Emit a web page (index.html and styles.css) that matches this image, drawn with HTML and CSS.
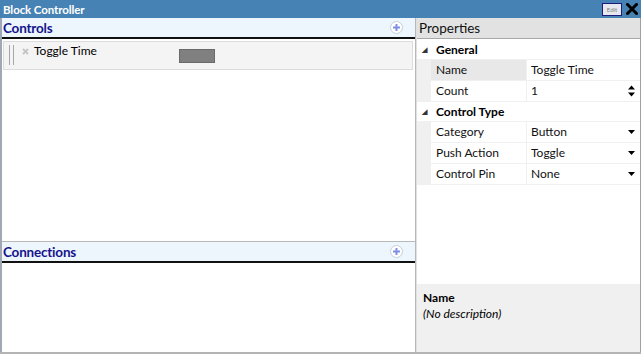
FILE: index.html
```html
<!DOCTYPE html>
<html>
<head>
<meta charset="utf-8">
<link rel="stylesheet" href="styles.css">
</head>
<body>
<div class="window">
  <div class="titlebar">
    <span class="title">Block Controller</span>
    <div class="title-actions">
      <span class="edit-btn">Edit</span>
      <svg class="close-icon" width="12" height="12" viewBox="0 0 12 12"><path d="M1.5 1.5 L10.5 10.5 M10.5 1.5 L1.5 10.5" stroke="#000" stroke-width="3" stroke-linecap="square"/></svg>
    </div>
  </div>
  <div class="main">
    <div class="left">
      <div class="section controls">
        <div class="section-head">
          <span class="section-title">Controls</span>
          <span class="add-btn"><svg width="13" height="13" viewBox="0 0 13 13"><circle cx="6.5" cy="6.5" r="6" fill="#fff" stroke="#c8cdd8"/><path d="M6.5 3 V10 M3 6.5 H10" stroke="#7f8fe6" stroke-width="2"/></svg></span>
        </div>
        <div class="section-body">
          <div class="item">
            <span class="grip"></span>
            <svg class="item-x" width="7" height="7" viewBox="0 0 7 7"><path d="M1 1 L6 6 M6 1 L1 6" stroke="#c4c4c4" stroke-width="1.8"/></svg>
            <span class="item-name">Toggle Time</span>
            <span class="item-swatch"></span>
          </div>
        </div>
      </div>
      <div class="section connections">
        <div class="section-head">
          <span class="section-title">Connections</span>
          <span class="add-btn"><svg width="13" height="13" viewBox="0 0 13 13"><circle cx="6.5" cy="6.5" r="6" fill="#fff" stroke="#c8cdd8"/><path d="M6.5 3 V10 M3 6.5 H10" stroke="#7f8fe6" stroke-width="2"/></svg></span>
        </div>
        <div class="section-body"></div>
      </div>
    </div>
    <div class="splitter"></div>
    <div class="right">
      <div class="props-head">Properties</div>
      <div class="grid">
        <div class="cat"><span class="tri">◢</span><span>General</span></div>
        <div class="prop selected"><span class="gutter"></span><span class="pname">Name</span><span class="pval">Toggle Time</span></div>
        <div class="prop"><span class="gutter"></span><span class="pname">Count</span><span class="pval">1<svg class="spin" width="7" height="12" viewBox="0 0 7 12"><path d="M0 4.5 L3.5 0.5 L7 4.5 Z M0 7.5 L3.5 11.5 L7 7.5 Z" fill="#000"/></svg></span></div>
        <div class="cat"><span class="tri">◢</span><span>Control Type</span></div>
        <div class="prop"><span class="gutter"></span><span class="pname">Category</span><span class="pval">Button<svg class="drop" width="7" height="4" viewBox="0 0 7 4"><path d="M0 0 H7 L3.5 4 Z" fill="#000"/></svg></span></div>
        <div class="prop"><span class="gutter"></span><span class="pname">Push Action</span><span class="pval">Toggle<svg class="drop" width="7" height="4" viewBox="0 0 7 4"><path d="M0 0 H7 L3.5 4 Z" fill="#000"/></svg></span></div>
        <div class="prop"><span class="gutter"></span><span class="pname">Control Pin</span><span class="pval">None<svg class="drop" width="7" height="4" viewBox="0 0 7 4"><path d="M0 0 H7 L3.5 4 Z" fill="#000"/></svg></span></div>
      </div>
      <div class="desc">
        <div class="desc-title">Name</div>
        <div class="desc-text">(No description)</div>
      </div>
    </div>
  </div>
</div>
</body>
</html>
```

FILE: styles.css
```css
html, body {
  margin: 0;
  padding: 0;
  background: #fff;
}
body {
  font-family: Lato, "Noto Sans", sans-serif;
  font-size: 12px;
  color: #000;
}
.window {
  width: 641px;
  height: 354px;
  display: flex;
  flex-direction: column;
  box-sizing: border-box;
  overflow: hidden;
}
.titlebar {
  height: 18px;
  flex: none;
  background: #4682b4;
  display: flex;
  align-items: center;
  justify-content: space-between;
  padding: 0 3px 0 3px;
}
.title {
  color: #fff;
  font-weight: bold;
  font-size: 11.5px;
  letter-spacing: -0.1px;
}
.title-actions {
  display: flex;
  align-items: center;
  gap: 4px;
}
.edit-btn {
  width: 18px;
  height: 11px;
  border: 1px solid #1c1c80;
  background: #e6e8ee;
  color: #808080;
  font-size: 6px;
  line-height: 11px;
  text-align: center;
}
.close-icon {
  display: block;
}
.main {
  flex: 1;
  display: flex;
  min-height: 0;
  border-bottom: 2px solid #b4b4b4;
}
.left {
  width: 413px;
  flex: none;
  display: flex;
  flex-direction: column;
  border-left: 2px solid #a0a8b4;
  border-right: 1px solid #b8b8b8;
}
.section {
  display: flex;
  flex-direction: column;
}
.controls {
  height: 223px;
  border-bottom: 1px solid #b8b8b8;
}
.connections {
  flex: 1;
}
.section-head {
  height: 19px;
  flex: none;
  background: #eef6fd;
  border-bottom: 2px solid #111;
  display: flex;
  align-items: center;
  justify-content: space-between;
  padding: 0 12px 0 1px;
}
.section-title {
  color: #14148c;
  font-weight: bold;
  font-size: 13.5px;
  letter-spacing: -0.2px;
}
.add-btn svg {
  display: block;
}
.section-body {
  flex: 1;
  padding: 2px 2px 0 1px;
}
.item {
  background: #f4f4f4;
  border: 1px solid #dcdcdc;
  display: flex;
  align-items: flex-start;
  box-sizing: border-box;
  height: 29px;
}
.grip {
  width: 3px;
  height: 20px;
  margin: 3px 0 0 5px;
  border-left: 1px solid #a8a8a8;
  border-right: 1px solid #a8a8a8;
}
.item-x {
  display: block;
  margin: 6px 0 0 8px;
}
.item-name {
  margin: 1px 0 0 5px;
}
.item-swatch {
  width: 34px;
  height: 12px;
  background: #808080;
  border: 1px solid #6a6a6a;
  margin: 7px 0 0 82px;
}
.splitter {
  width: 1px;
  background: #e0e0e0;
  flex: none;
}
.right {
  flex: 1;
  display: flex;
  flex-direction: column;
  border-right: 1px solid #a0a0a0;
}
.props-head {
  height: 20px;
  flex: none;
  background: #e2e2e2;
  border-bottom: 1px solid #a8a8a8;
  font-size: 13.5px;
  line-height: 20px;
  padding-left: 2px;
  color: #111;
}
.grid {
  flex: 1;
  padding-top: 1px;
}
.cat {
  height: 20px;
  box-sizing: border-box;
  display: flex;
  align-items: center;
  font-weight: bold;
  background: #fff;
  border-bottom: 1px solid #f0f0f0;
}
.tri {
  font-size: 7px;
  color: #333;
  width: 17px;
  padding-left: 5px;
  box-sizing: border-box;
}
.cat span:last-child {
  margin-left: 2px;
}
.prop {
  height: 21px;
  display: flex;
  box-sizing: border-box;
  border-bottom: 1px solid #f0f0f0;
}
.gutter {
  width: 14px;
  background: #f0f0f0;
  flex: none;
}
.pname {
  width: 96px;
  flex: none;
  padding-left: 5px;
  box-sizing: border-box;
  line-height: 20px;
  border-right: 1px solid #f0f0f0;
  color: #111;
}
.selected .pname {
  background: #e8e8e8;
}
.pval {
  flex: 1;
  padding-left: 4px;
  line-height: 20px;
  display: flex;
  align-items: center;
  justify-content: space-between;
  padding-right: 5px;
  color: #111;
}
.spin, .drop {
  display: block;
}
.desc {
  height: 68px;
  flex: none;
  background: #f0f0f0;
  padding: 6px 0 0 6px;
  box-sizing: border-box;
}
.desc-title {
  font-weight: bold;
  line-height: 16px;
}
.desc-text {
  font-style: italic;
  line-height: 15px;
}
```
